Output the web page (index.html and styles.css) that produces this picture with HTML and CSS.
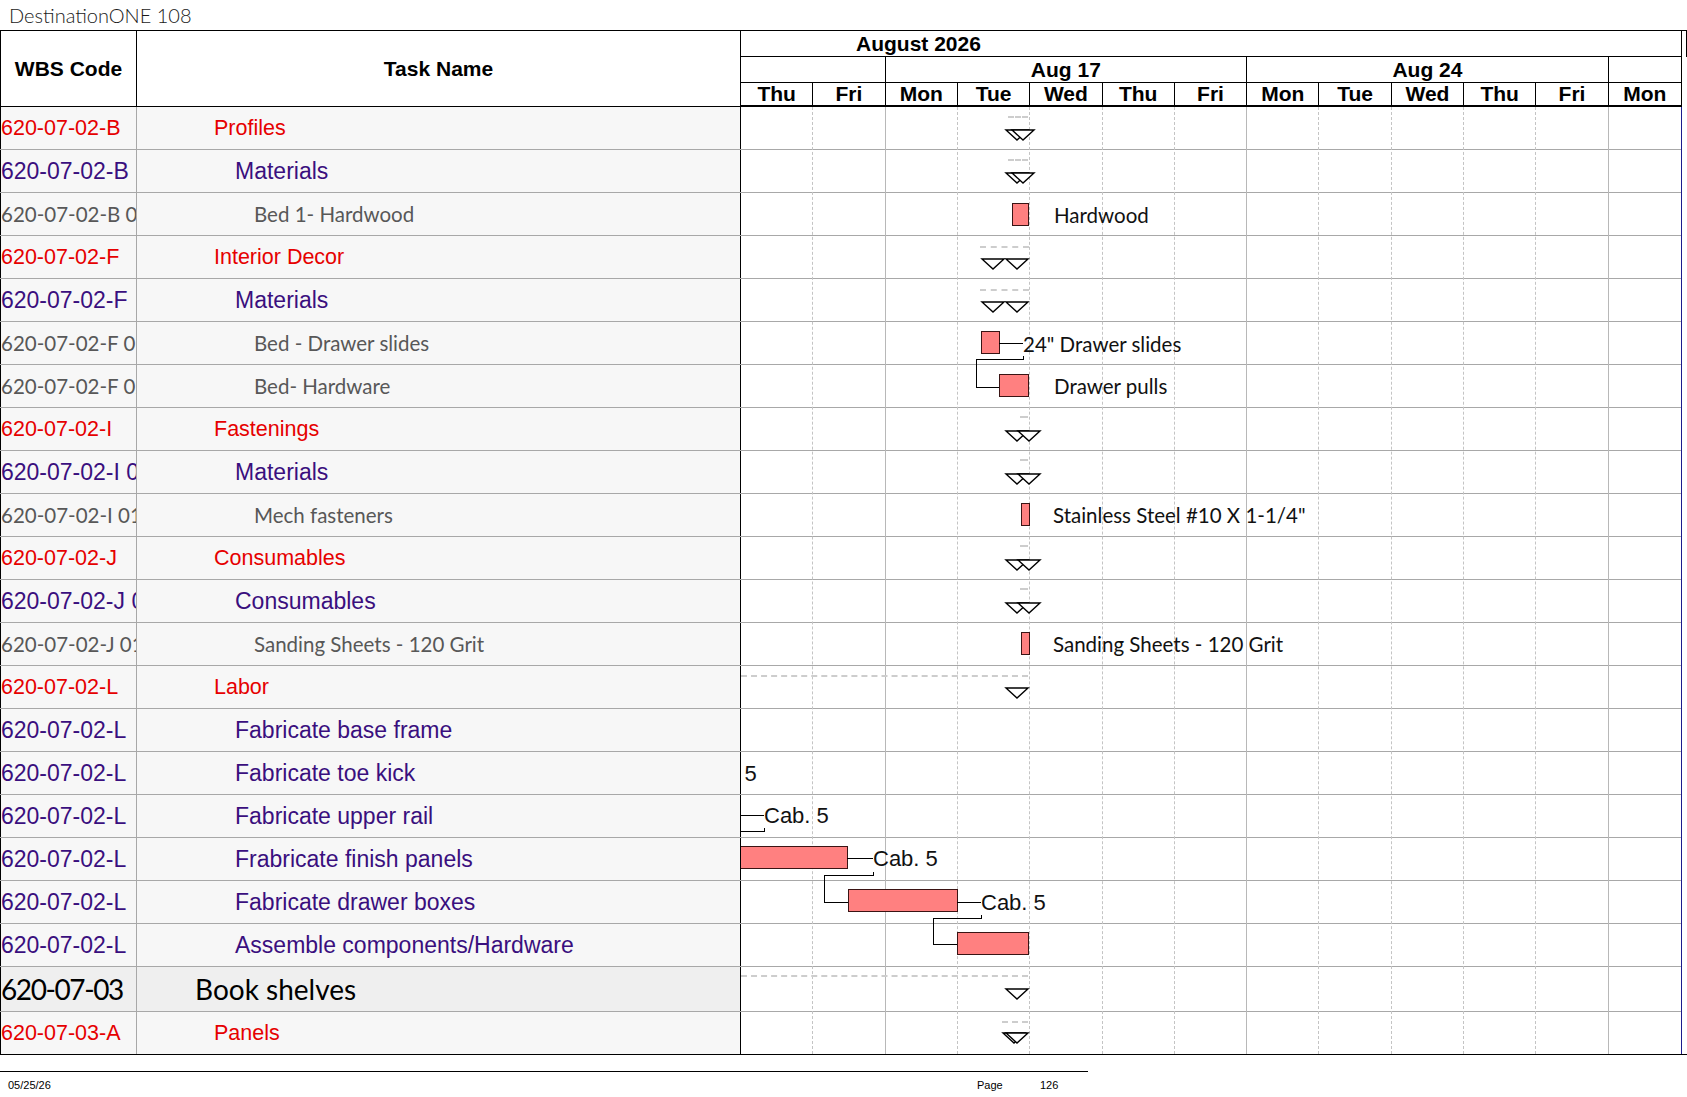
FILE: index.html
```html
<!DOCTYPE html>
<html>
<head>
<meta charset="utf-8">
<title>DestinationONE 108</title>
<link rel="stylesheet" href="styles.css">
</head>
<body>
<div class="title">DestinationONE 108</div>

<div class="head">
  <div class="h-wbs">WBS Code</div>
  <div class="h-task">Task Name</div>
  <div class="h-time">
    <div class="h-month">August 2026</div>
    <div class="h-weeks">
      <div class="wk s2"></div>
      <div class="wk s5">Aug 17</div>
      <div class="wk s5">Aug 24</div>
      <div class="wk s1 last"></div>
    </div>
    <div class="h-days">
      <div class="d">Thu</div><div class="d">Fri</div><div class="d">Mon</div><div class="d">Tue</div><div class="d">Wed</div><div class="d">Thu</div><div class="d">Fri</div><div class="d">Mon</div><div class="d">Tue</div><div class="d">Wed</div><div class="d">Thu</div><div class="d">Fri</div><div class="d last">Mon</div>
    </div>
  </div>
  <div class="h-edge"></div>
</div>

<div class="body">
  <div class="tbl">
    <div class="row r-l1"><div class="wbs">620-07-02-B</div><div class="task">Profiles</div></div>
    <div class="row r-l2"><div class="wbs">620-07-02-B</div><div class="task">Materials</div></div>
    <div class="row r-leaf"><div class="wbs">620-07-02-B 01</div><div class="task">Bed 1- Hardwood</div></div>
    <div class="row r-l1"><div class="wbs">620-07-02-F</div><div class="task">Interior Decor</div></div>
    <div class="row r-l2"><div class="wbs">620-07-02-F</div><div class="task">Materials</div></div>
    <div class="row r-leaf"><div class="wbs">620-07-02-F 01</div><div class="task">Bed - Drawer slides</div></div>
    <div class="row r-leaf"><div class="wbs">620-07-02-F 02</div><div class="task">Bed- Hardware</div></div>
    <div class="row r-l1"><div class="wbs">620-07-02-I</div><div class="task">Fastenings</div></div>
    <div class="row r-l2"><div class="wbs">620-07-02-I 01</div><div class="task">Materials</div></div>
    <div class="row r-leaf"><div class="wbs">620-07-02-I 01</div><div class="task">Mech fasteners</div></div>
    <div class="row r-l1"><div class="wbs">620-07-02-J</div><div class="task">Consumables</div></div>
    <div class="row r-l2"><div class="wbs">620-07-02-J 01</div><div class="task">Consumables</div></div>
    <div class="row r-leaf"><div class="wbs">620-07-02-J 01</div><div class="task">Sanding Sheets - 120 Grit</div></div>
    <div class="row r-l1"><div class="wbs">620-07-02-L</div><div class="task">Labor</div></div>
    <div class="row r-l2"><div class="wbs">620-07-02-L</div><div class="task">Fabricate base frame</div></div>
    <div class="row r-l2"><div class="wbs">620-07-02-L</div><div class="task">Fabricate toe kick</div></div>
    <div class="row r-l2"><div class="wbs">620-07-02-L</div><div class="task">Fabricate upper rail</div></div>
    <div class="row r-l2"><div class="wbs">620-07-02-L</div><div class="task">Frabricate finish panels</div></div>
    <div class="row r-l2"><div class="wbs">620-07-02-L</div><div class="task">Fabricate drawer boxes</div></div>
    <div class="row r-l2"><div class="wbs">620-07-02-L</div><div class="task">Assemble components/Hardware</div></div>
    <div class="row r-l0"><div class="wbs">620-07-03</div><div class="task">Book shelves</div></div>
    <div class="row r-l1 r-last"><div class="wbs">620-07-03-A</div><div class="task">Panels</div></div>
  </div>

  <div class="gantt">
    <div class="grow"></div><div class="grow"></div><div class="grow"></div><div class="grow"></div>
    <div class="grow"></div><div class="grow"></div><div class="grow"></div><div class="grow"></div>
    <div class="grow"></div><div class="grow"></div><div class="grow"></div><div class="grow"></div>
    <div class="grow"></div><div class="grow"></div><div class="grow"></div><div class="grow"></div>
    <div class="grow"></div><div class="grow"></div><div class="grow"></div><div class="grow"></div>
    <div class="grow g-big"></div><div class="grow g-last"></div>

    <div class="vgrid">
      <div class="vc"></div><div class="vc wk"></div><div class="vc"></div><div class="vc"></div><div class="vc"></div><div class="vc"></div><div class="vc wk"></div><div class="vc"></div><div class="vc"></div><div class="vc"></div><div class="vc"></div><div class="vc wk"></div><div class="vc end"></div>
    </div>

    <!-- row 0 Profiles -->
    <div class="dash" style="left:267px;top:9px;width:20px"></div>
    <svg class="tri" style="left:264px;top:22px" viewBox="0 0 24 12"><polygon points="1,1 23,1 12,11"/></svg>
    <svg class="tri" style="left:270px;top:22px" viewBox="0 0 24 12"><polygon points="1,1 23,1 12,11"/></svg>
    <!-- row 1 -->
    <div class="dash" style="left:267px;top:52px;width:20px"></div>
    <svg class="tri" style="left:264px;top:65px" viewBox="0 0 24 12"><polygon points="1,1 23,1 12,11"/></svg>
    <svg class="tri" style="left:270px;top:65px" viewBox="0 0 24 12"><polygon points="1,1 23,1 12,11"/></svg>
    <!-- row 2 -->
    <div class="bar" style="left:271px;top:96px;width:17px"></div>
    <div class="lbl cal" style="left:313px;top:96px">Hardwood</div>
    <!-- row 3 -->
    <div class="dash" style="left:239px;top:139px;width:49px"></div>
    <svg class="tri" style="left:240px;top:151px" viewBox="0 0 24 12"><polygon points="1,1 23,1 12,11"/></svg>
    <svg class="tri" style="left:264px;top:151px" viewBox="0 0 24 12"><polygon points="1,1 23,1 12,11"/></svg>
    <!-- row 4 -->
    <div class="dash" style="left:239px;top:182px;width:49px"></div>
    <svg class="tri" style="left:240px;top:194px" viewBox="0 0 24 12"><polygon points="1,1 23,1 12,11"/></svg>
    <svg class="tri" style="left:264px;top:194px" viewBox="0 0 24 12"><polygon points="1,1 23,1 12,11"/></svg>
    <!-- row 5 -->
    <div class="bar" style="left:240px;top:224px;width:19px"></div>
    <div class="ln-h" style="left:258px;top:236px;width:24px"></div>
    <div class="lbl cal" style="left:282px;top:225px">24" Drawer slides</div>
    <div class="ln-v" style="left:282px;top:249px;height:4px"></div>
    <div class="ln-h" style="left:235px;top:252px;width:48px"></div>
    <div class="ln-v" style="left:235px;top:252px;height:29px"></div>
    <div class="ln-h" style="left:235px;top:280px;width:24px"></div>
    <!-- row 6 -->
    <div class="bar" style="left:258px;top:267px;width:30px"></div>
    <div class="lbl cal" style="left:313px;top:267px">Drawer pulls</div>
    <!-- row 7 -->
    <div class="dash" style="left:279px;top:309px;width:8px"></div>
    <svg class="tri" style="left:264px;top:323px" viewBox="0 0 24 12"><polygon points="1,1 23,1 12,11"/></svg>
    <svg class="tri" style="left:276px;top:323px" viewBox="0 0 24 12"><polygon points="1,1 23,1 12,11"/></svg>
    <!-- row 8 -->
    <div class="dash" style="left:279px;top:352px;width:8px"></div>
    <svg class="tri" style="left:264px;top:366px" viewBox="0 0 24 12"><polygon points="1,1 23,1 12,11"/></svg>
    <svg class="tri" style="left:276px;top:366px" viewBox="0 0 24 12"><polygon points="1,1 23,1 12,11"/></svg>
    <!-- row 9 -->
    <div class="bar" style="left:280px;top:396px;width:9px"></div>
    <div class="lbl cal" style="left:312px;top:396px">Stainless Steel #10 X 1-1/4"</div>
    <!-- row 10 -->
    <div class="dash" style="left:279px;top:438px;width:8px"></div>
    <svg class="tri" style="left:264px;top:452px" viewBox="0 0 24 12"><polygon points="1,1 23,1 12,11"/></svg>
    <svg class="tri" style="left:276px;top:452px" viewBox="0 0 24 12"><polygon points="1,1 23,1 12,11"/></svg>
    <!-- row 11 -->
    <div class="dash" style="left:279px;top:481px;width:8px"></div>
    <svg class="tri" style="left:264px;top:495px" viewBox="0 0 24 12"><polygon points="1,1 23,1 12,11"/></svg>
    <svg class="tri" style="left:276px;top:495px" viewBox="0 0 24 12"><polygon points="1,1 23,1 12,11"/></svg>
    <!-- row 12 -->
    <div class="bar" style="left:280px;top:525px;width:9px"></div>
    <div class="lbl cal" style="left:312px;top:525px">Sanding Sheets - 120 Grit</div>
    <!-- row 13 Labor -->
    <div class="dash" style="left:0px;top:568px;width:287px"></div>
    <svg class="tri" style="left:264px;top:580px" viewBox="0 0 24 12"><polygon points="1,1 23,1 12,11"/></svg>
    <!-- row 15 -->
    <div class="lbl ar" style="left:-49px;top:655px">Cab. 5</div>
    <!-- row 16 -->
    <div class="ln-h" style="left:-10px;top:708px;width:33px"></div>
    <div class="lbl ar" style="left:23px;top:697px">Cab. 5</div>
    <div class="ln-v" style="left:23px;top:721px;height:4px"></div>
    <div class="ln-h" style="left:-10px;top:724px;width:34px"></div>
    <!-- row 17 -->
    <div class="bar" style="left:-4px;top:739px;width:111px"></div>
    <div class="ln-h" style="left:106px;top:751px;width:26px"></div>
    <div class="lbl ar" style="left:132px;top:740px">Cab. 5</div>
    <div class="ln-v" style="left:132px;top:765px;height:4px"></div>
    <div class="ln-h" style="left:83px;top:768px;width:50px"></div>
    <div class="ln-v" style="left:83px;top:768px;height:28px"></div>
    <div class="ln-h" style="left:83px;top:795px;width:24px"></div>
    <!-- row 18 -->
    <div class="bar" style="left:107px;top:782px;width:110px"></div>
    <div class="ln-h" style="left:216px;top:795px;width:24px"></div>
    <div class="lbl ar" style="left:240px;top:784px">Cab. 5</div>
    <div class="ln-v" style="left:240px;top:808px;height:4px"></div>
    <div class="ln-h" style="left:192px;top:811px;width:49px"></div>
    <div class="ln-v" style="left:192px;top:811px;height:27px"></div>
    <div class="ln-h" style="left:192px;top:837px;width:24px"></div>
    <!-- row 19 -->
    <div class="bar" style="left:216px;top:825px;width:72px"></div>
    <!-- row 20 Book shelves -->
    <div class="dash" style="left:0px;top:868px;width:287px"></div>
    <svg class="tri" style="left:264px;top:881px" viewBox="0 0 24 12"><polygon points="1,1 23,1 12,11"/></svg>
    <!-- row 21 Panels -->
    <div class="dash" style="left:261px;top:914px;width:26px"></div>
    <svg class="tri" style="left:261px;top:925px" viewBox="0 0 24 12"><polygon points="1,1 23,1 12,11"/></svg>
    <svg class="tri" style="left:264px;top:925px" viewBox="0 0 24 12"><polygon points="1,1 23,1 12,11"/></svg>
  </div>
  <div class="fill"></div>
</div>

<div class="foot">
  <span class="f-date">05/25/26</span>
  <span class="f-page">Page</span>
  <span class="f-num">126</span>
</div>
</body>
</html>
```

FILE: styles.css
```css
* { box-sizing: border-box; }
html, body { margin: 0; padding: 0; background: #fff; }
body {
  width: 1687px;
  height: 1097px;
  overflow: hidden;
  font-family: "Liberation Sans", Arial, sans-serif;
  color: #000;
}

.title {
  height: 30px;
  padding-left: 9px;
  font-family: Lato, "Open Sans", sans-serif;
  font-weight: 300;
  font-size: 20px;
  line-height: 30px;
  color: #1a1a1a;
}

/* ---------- header ---------- */
.head {
  display: flex;
  height: 77px;
  border-top: 1px solid #000;
  font-weight: bold;
  font-size: 21px;
}
.h-wbs, .h-task {
  display: flex;
  align-items: center;
  justify-content: center;
  border-bottom: 1px solid #000;
  border-right: 1px solid #000;
}
.h-wbs { width: 137px; border-left: 1px solid #000; }
.h-task { width: 604px; }
.h-time {
  width: 941px;
  display: flex;
  flex-direction: column;
  border-right: 1px solid #000;
}
.h-month {
  height: 26px;
  line-height: 25px;
  padding-left: 115px;
  border-bottom: 1px solid #000;
}
.h-weeks, .h-days {
  display: grid;
  grid-template-columns: repeat(13, 1fr);
}
.h-weeks { height: 26px; border-bottom: 1px solid #000; }
.h-days { height: 24px; border-bottom: 2px solid #000; }
.wk, .d {
  border-right: 1px solid #000;
  text-align: center;
  line-height: 25px;
}
.d { line-height: 22px; }
.wk.last, .d.last { border-right: none; }
.s1 { grid-column: span 1; }
.s2 { grid-column: span 2; }
.s5 { grid-column: span 5; }
.h-edge {
  width: 5px;
  height: 26px;
  border-right: 1px solid #000;
}

/* ---------- body ---------- */
.body {
  display: flex;
  border-bottom: 1px solid #000;
}
.tbl { width: 741px; }
.row {
  display: flex;
  height: 43px;
  border-bottom: 1px solid #a8a8a8;
  background: #f7f7f7;
}
.row.r-last { height: 42px; border-bottom: none; }
.wbs, .task {
  display: flex;
  align-items: center;
  white-space: nowrap;
  overflow: hidden;
}
.wbs {
  width: 137px;
  border-left: 1px solid #000;
  border-right: 1px solid #a8a8a8;
}
.task {
  width: 604px;
  border-right: 1px solid #000;
}

.r-l1 { color: #e60000; font-size: 21.5px; }
.r-l1 .task { padding-left: 77px; }
.r-l2 { color: #3a0f7e; font-size: 23px; }
.r-l2 .task { padding-left: 98px; }
.r-leaf {
  color: #585858;
  font-family: Lato, "Open Sans", sans-serif;
  font-size: 20.5px;
}
.r-leaf .task { padding-left: 117px; }
.r-l0 {
  height: 45px;
  background: #efefef;
  color: #000;
  font-family: Lato, "Open Sans", sans-serif;
  font-size: 28px;
}
.r-l0 .wbs { letter-spacing: -1.4px; }
.r-l0 .task { padding-left: 58px; }

.gantt {
  position: relative;
  width: 941px;
  border-right: 1px solid #1c1c8c;
  overflow: hidden;
  background: #fff;
}
.grow {
  height: 43px;
  border-bottom: 1px solid #a8a8a8;
}
.grow.g-big { height: 45px; }
.grow.g-last { height: 42px; border-bottom: none; }
.fill { flex: 1; }

.vgrid {
  position: absolute;
  left: 0;
  top: 0;
  width: 940px;
  bottom: 0;
  display: grid;
  grid-template-columns: repeat(13, 1fr);
}
.vc { border-right: 1px dashed #c4c4c4; }
.vc.wk { border-right: 1px solid #b8b8b8; }
.vc.end { border-right: none; }

.dash {
  position: absolute;
  height: 0;
  border-top: 2px dashed #cdcdcd;
}
.tri {
  position: absolute;
  width: 24px;
  height: 12px;
  overflow: visible;
}
.tri polygon {
  fill: #fff;
  stroke: #000;
  stroke-width: 1.4;
}
.bar {
  position: absolute;
  height: 23px;
  background: #ff8080;
  border: 1px solid #3a1414;
}
.ln-h {
  position: absolute;
  height: 0;
  border-top: 1px solid #000;
}
.ln-v {
  position: absolute;
  width: 0;
  border-left: 1px solid #000;
}
.lbl {
  position: absolute;
  height: 24px;
  line-height: 24px;
  white-space: nowrap;
  color: #111;
}
.lbl.cal {
  font-family: Lato, "Open Sans", sans-serif;
  font-size: 20.5px;
}
.lbl.ar { font-size: 22px; }

/* ---------- footer ---------- */
.foot {
  display: flex;
  width: 1088px;
  height: 26px;
  margin-top: 16px;
  border-top: 1px solid #000;
  align-items: center;
  font-size: 11px;
}
.f-date { width: 977px; padding-left: 8px; }
.f-page { width: 63px; }
```
